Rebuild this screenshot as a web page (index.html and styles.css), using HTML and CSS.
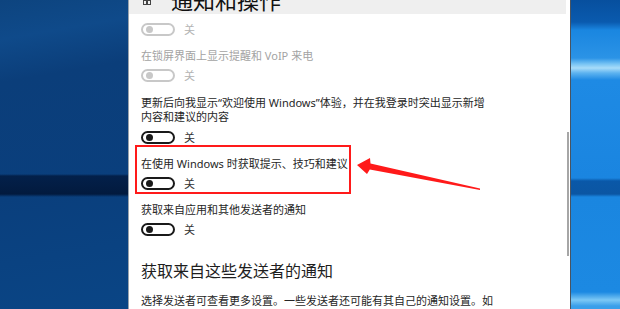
FILE: index.html
```html
<!DOCTYPE html>
<html lang="zh-CN">
<head>
  <meta charset="UTF-8" />
  <meta name="viewport" content="width=device-width, initial-scale=1.0" />
  <title>通知和操作</title>
  <link rel="stylesheet" href="styles.css">
</head>
<body>
  <div class="screen">
    <div class="desktop desktop-left"></div>

    <div class="window">
      <div class="window-main">
        <header class="title-bar">
          <svg class="title-icon" width="8" height="6" viewBox="0 0 8 6">
            <rect x="0.5" y="0.5" width="3" height="4" fill="none" stroke="#444" stroke-width="1"/>
            <rect x="4.5" y="0.5" width="3" height="4" fill="none" stroke="#444" stroke-width="1"/>
          </svg>
          <h1 class="title">通知和操作</h1>
        </header>

        <div class="settings">
          <div class="setting">
            <div class="toggle-row disabled">
              <span class="toggle"></span><span class="state">关</span>
            </div>
          </div>

          <div class="setting">
            <div class="label disabled">在锁屏界面上显示提醒和 VoIP 来电</div>
            <div class="toggle-row disabled">
              <span class="toggle"></span><span class="state">关</span>
            </div>
          </div>

          <div class="setting">
            <div class="label multi">更新后向我显示“欢迎使用 Windows”体验，并在我登录时突出显示新增<br>内容和建议的内容</div>
            <div class="toggle-row">
              <span class="toggle"></span><span class="state">关</span>
            </div>
          </div>

          <div class="setting">
            <div class="label">在使用 Windows 时获取提示、技巧和建议</div>
            <div class="toggle-row">
              <span class="toggle"></span><span class="state">关</span>
            </div>
          </div>

          <div class="setting">
            <div class="label">获取来自应用和其他发送者的通知</div>
            <div class="toggle-row">
              <span class="toggle"></span><span class="state">关</span>
            </div>
          </div>

          <h2 class="section-title">获取来自这些发送者的通知</h2>
          <p class="section-text">选择发送者可查看更多设置。一些发送者还可能有其自己的通知设置。如</p>
        </div>
      </div>
      <div class="scrollbar"><div class="thumb"></div></div>
    </div>

    <div class="desktop desktop-right"></div>

    <!-- red highlight + arrow drawn on top of the screenshot -->
    <svg class="annotation" width="620" height="309" viewBox="0 0 620 309">
      <rect x="136" y="146" width="214" height="47" fill="none" stroke="#ff1a1a" stroke-width="2"/>
      <polygon fill="#ff1a1a" points="357,165 370,158 370.5,163.5 480,188.6 480,190 369.8,169.5 367,174"/>
    </svg>
  </div>
</body>
</html>
```

FILE: styles.css
```css
* {
  box-sizing: border-box;
}
body {
  margin: 0;
  font-family: "Noto Sans", "Noto Sans CJK SC", sans-serif;
  background: #0b3f7c;
  overflow: hidden;
}
.screen {
  position: relative;
  display: flex;
  width: 620px;
  height: 309px;
  overflow: hidden;
}
.desktop-left {
  width: 128px;
  background:
    linear-gradient(180deg, transparent 174px, #03204a 176px, #021a3e 194px, transparent 197px),
    linear-gradient(170deg, #0d447f 0%, #0f4a8a 12%, #0b3e7a 25%, #0a3f7d 60%, #0a4585 100%);
}
.window {
  width: 443px;
  display: flex;
  background: #ffffff;
  border-left: 1px solid #9aa3ad;
  border-right: 1px solid #4a5460;
}
.window-main {
  flex: 1;
  min-width: 0;
}
.title-bar {
  height: 14px;
  background: #efefef;
  display: flex;
  align-items: flex-start;
  overflow: hidden;
  padding-left: 14px;
}
.title {
  margin: -12px 0 0 20px;
  font-size: 22px;
  line-height: 24px;
  font-weight: 400;
  color: #111;
  white-space: nowrap;
}
.settings {
  padding: 2px 0 0 12px;
  color: #262626;
}
.label {
  margin-top: 13px;
  font-size: 11px;
  line-height: 13px;
  color: #262626;
  white-space: nowrap;
}
.label.multi {
  margin-top: 14px;
  line-height: 14px;
}
.label.disabled {
  color: #a3a3a3;
}
.toggle-row {
  margin-top: 7px;
  display: flex;
  align-items: center;
  height: 13px;
}
.toggle {
  width: 34px;
  height: 13px;
  border: 2px solid #1a1a1a;
  border-radius: 7px;
  display: flex;
  align-items: center;
  padding-left: 3px;
}
.toggle::before {
  content: "";
  width: 7px;
  height: 7px;
  border-radius: 50%;
  background: #1a1a1a;
}
.state {
  margin-left: 9px;
  font-size: 11px;
  line-height: 13px;
  color: #333;
}
.toggle-row.disabled .toggle {
  border-color: #c8c8c8;
}
.toggle-row.disabled .toggle::before {
  background: #c8c8c8;
}
.toggle-row.disabled .state {
  color: #b3b3b3;
}
.section-title {
  margin: 25px 0 0;
  font-size: 16px;
  line-height: 20px;
  font-weight: 400;
  color: #1e1e1e;
}
.section-text {
  margin: 13px 0 0;
  font-size: 11px;
  line-height: 14px;
  color: #262626;
  white-space: nowrap;
}
.scrollbar {
  width: 4px;
  padding-top: 132px;
}
.thumb {
  width: 2px;
  margin-left: 1px;
  height: 124px;
  background: #a6a6a6;
}
.desktop-right {
  flex: 1;
  background:
    linear-gradient(180deg,
      #074f9e 0px, #0a5aae 22px, #1a86e0 30px, #2b93e6 58px,
      #78c4f4 64px, #a8dcf9 68px, #5db3f0 73px, #1e8ae4 80px,
      #1a85e0 178px, #0a58a8 181px, #0b56a3 194px, #1a86e0 197px,
      #1c89e2 292px, #7cc8f5 300px, #3a9fea 306px);
}
.annotation {
  position: absolute;
  left: 0;
  top: 0;
  pointer-events: none;
}
```
